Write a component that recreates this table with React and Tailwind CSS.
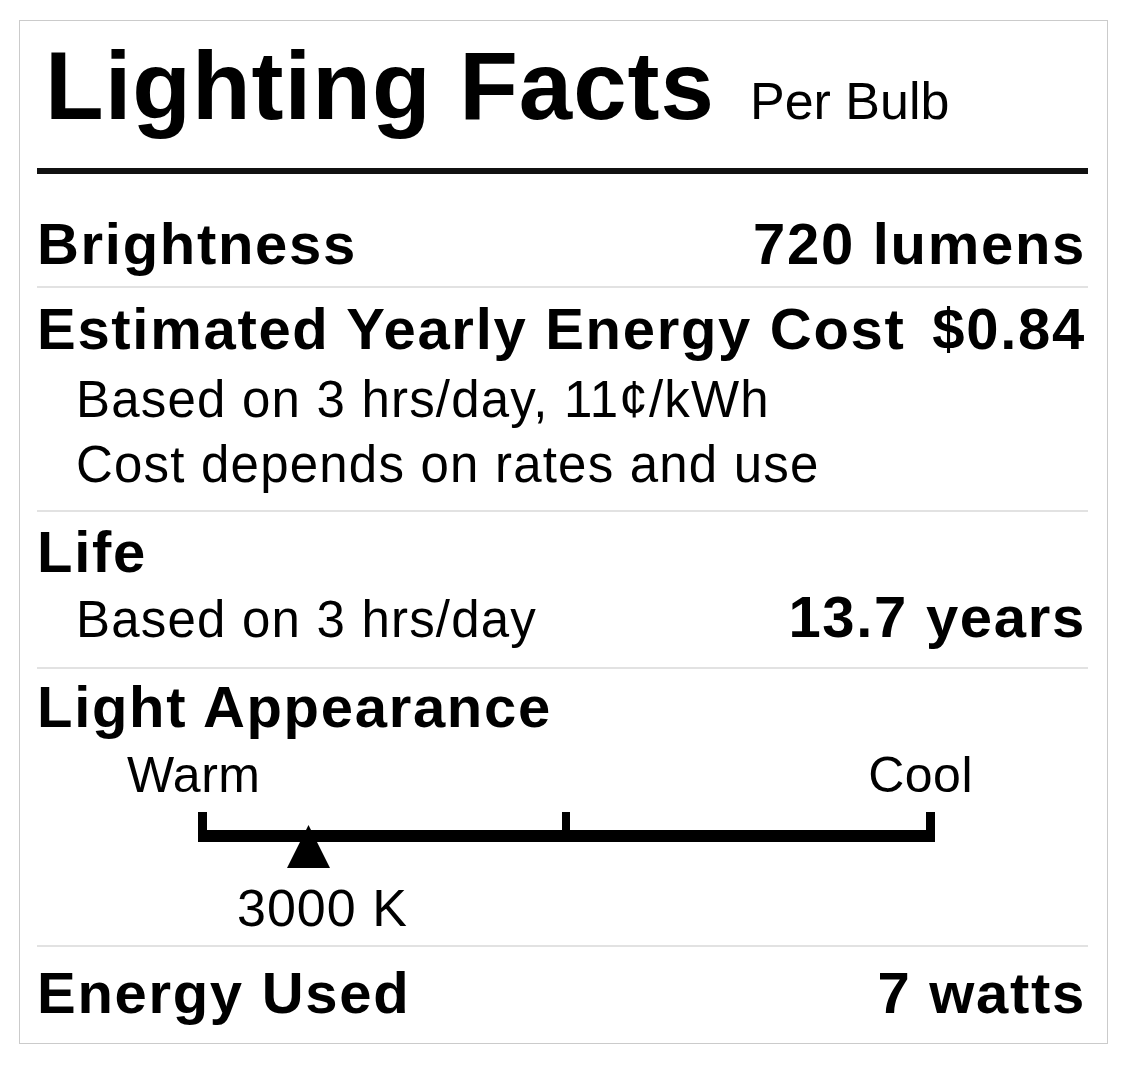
export default function App() {
  const font = { fontFamily: '"Liberation Sans", Arial, Helvetica, sans-serif' };
  const bold = "text-[58px] leading-none font-bold tracking-[1.7px] text-black";
  const reg = "text-[51px] leading-[65px] tracking-[1.2px] text-black";
  const sep = "h-[2px] bg-[#e2e2e2]";
  return (
    <div className="w-[1125px] h-[1069px] bg-white pt-[20px] pl-[19px]" style={font}>
      <div className="w-[1089px] border border-[#cbcbcb] pl-[17px] pr-[19px] pt-[16.5px] pb-[21px] bg-white">
        <div className="flex items-baseline pl-[8px] gap-[35px]">
          <span className="text-[96px] leading-none font-bold tracking-[1px] text-black">Lighting Facts</span>
          <span className="text-[52px] leading-none text-black">Per Bulb</span>
        </div>
        <div className="mt-[34px] h-[6px] bg-[#111]" />

        <div className={`mt-[41px] flex justify-between items-baseline pr-[2px] ${bold}`}>
          <span>Brightness</span>
          <span>720 lumens</span>
        </div>
        <div className={`mt-[13.6px] ${sep}`} />

        <div className={`mt-[12.4px] flex justify-between items-baseline pr-[2px] ${bold}`}>
          <span>Estimated Yearly Energy Cost</span>
          <span>$0.84</span>
        </div>
        <div className={`mt-[8.8px] ml-[39px] ${reg}`}>
          <div>Based on 3 hrs/day, 11¢/kWh</div>
          <div>Cost depends on rates and use</div>
        </div>
        <div className={`mt-[12.8px] ${sep}`} />

        <div className={`mt-[10.9px] ${bold}`}>Life</div>
        <div className="mt-[6.3px] flex justify-between items-baseline pr-[2px]">
          <span className={`ml-[39px] ${reg}`}>Based on 3 hrs/day</span>
          <span className={bold}>13.7 years</span>
        </div>
        <div className={`mt-[14.8px] ${sep}`} />

        <div className={`mt-[8.9px] ${bold}`}>Light Appearance</div>
        <div className="mt-[13.8px] ml-[90px] w-[846px] flex justify-between text-[50px] leading-none tracking-[0.5px] text-black">
          <span>Warm</span>
          <span>Cool</span>
        </div>
        <svg className="block mt-[12.3px] ml-[161px]" width="740" height="56" viewBox="0 0 740 56">
          <rect x="0" y="0" width="9" height="30" fill="#000" />
          <rect x="0" y="18" width="737" height="12" fill="#000" />
          <rect x="364" y="0" width="8" height="20" fill="#000" />
          <rect x="728" y="0" width="9" height="30" fill="#000" />
          <polygon points="110.5,13 89,56 132,56" fill="#000" />
        </svg>
        <div className="mt-[14px] ml-[200px] text-[52px] leading-none tracking-[1px] text-black">3000 K</div>
        <div className={`mt-[11px] ${sep}`} />

        <div className={`mt-[16.9px] flex justify-between items-baseline pr-[2px] ${bold}`}>
          <span>Energy Used</span>
          <span>7 watts</span>
        </div>
      </div>
    </div>
  );
}
